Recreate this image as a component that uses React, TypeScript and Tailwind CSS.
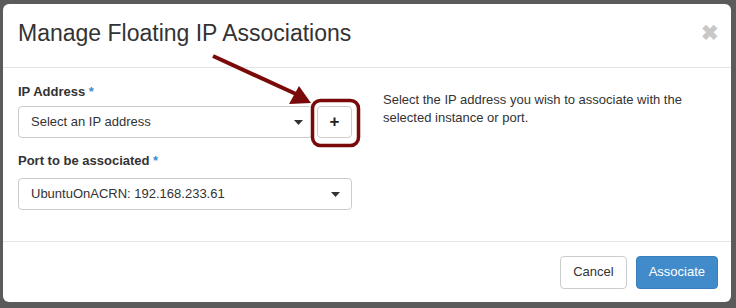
function Caret() {
  return (
    <svg width="9" height="5" viewBox="0 0 9 5" className="shrink-0">
      <path d="M0 0 H9 L4.5 5 Z" fill="#333" />
    </svg>
  );
}

export default function App() {
  return (
    <div
      className="w-[736px] h-[308px] bg-[#5b5b5b] pt-[4px] pl-[3px] pr-[5px] pb-[6px] relative"
      style={{ fontFamily: '"Liberation Sans", Arial, sans-serif' }}
    >
      <div className="h-full bg-white rounded-[6px] flex flex-col text-[#333]">
        {/* header */}
        <div className="h-[64px] border-b border-[#e5e5e5] flex items-center justify-between pl-[15px] pr-[14px]">
          <h4 className="text-[23px] leading-none text-[#333] mt-[-5px]">Manage Floating IP Associations</h4>
          <span className="text-[#c8c8c8] text-[21px] font-bold leading-none mt-[-6px] mr-[-2px]">✖</span>
        </div>

        {/* body */}
        <div className="flex-1 flex pl-[15px] pr-[15px] pt-[15px]">
          <div className="w-[334px] flex flex-col">
            <label className="text-[13px] font-bold leading-[18px]">
              IP Address <span className="text-[#428bca]">*</span>
            </label>
            <div className="flex mt-[5px] gap-[4px]">
              <div className="flex-1 h-[32px] border border-[#ccc] rounded-[4px] flex items-center justify-between pl-[12px] pr-[9px]">
                <span className="text-[13px] text-[#333]">Select an IP address</span>
                <Caret />
              </div>
              <div className="w-[35px] h-[32px] border border-[#ccc] rounded-[4px] flex items-center justify-center">
                <span className="text-[17px] font-bold leading-none text-[#222] mt-[-2px]">+</span>
              </div>
            </div>
            <label className="text-[13px] font-bold leading-[18px] mt-[14px]">
              Port to be associated <span className="text-[#428bca]">*</span>
            </label>
            <div className="mt-[8px] h-[32px] border border-[#ccc] rounded-[4px] flex items-center justify-between pl-[12px] pr-[11px]">
              <span className="text-[13px] text-[#333]">UbuntuOnACRN: 192.168.233.61</span>
              <Caret />
            </div>
          </div>
          <div className="ml-[31px] mt-[8px] text-[13px] leading-[18px] w-[320px]">
            Select the IP address you wish to associate with the selected instance or port.
          </div>
        </div>

        {/* footer */}
        <div className="h-[61px] border-t border-[#e5e5e5] flex items-center justify-end gap-[9px] pr-[13px]">
          <button className="h-[33px] px-[12px] border border-[#ccc] rounded-[4px] text-[13px] text-[#333] bg-white">
            Cancel
          </button>
          <button className="h-[33px] px-[12px] border border-[#3a7fbd] rounded-[4px] text-[13px] text-white bg-[#428bca]">
            Associate
          </button>
        </div>
      </div>

      {/* annotation overlay */}
      <svg className="absolute left-0 top-0 pointer-events-none" width="736" height="308">
        <line x1="213" y1="56" x2="296" y2="94" stroke="#7a0a0a" strokeWidth="4" />
        <polygon points="311,103 289,104 299,86" fill="#7a0a0a" />
        <rect x="312.5" y="100.5" width="46" height="45" rx="8" fill="none" stroke="#7a0a0a" strokeWidth="3.5" />
      </svg>
    </div>
  );
}
